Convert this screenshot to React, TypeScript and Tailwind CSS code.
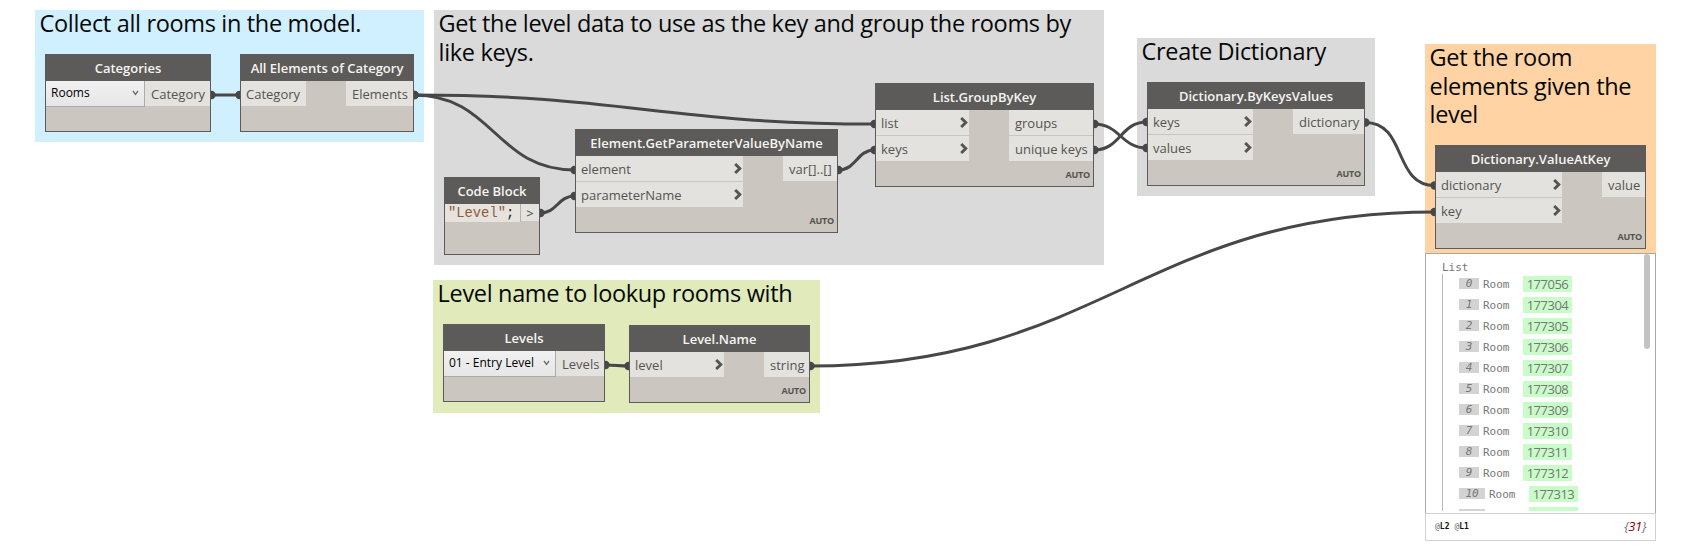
import type { ReactNode } from "react";

type Port = { label: string; chevron?: boolean };

type NodeProps = {
  title: string;
  place: string;
  inputs?: Port[];
  inputsWidth?: string;
  outputs?: Port[];
  outputsWidth?: string;
  auto?: boolean;
  children?: ReactNode;
};

function Chevron() {
  return (
    <svg className="h-[11px] w-2 shrink-0" viewBox="0 0 8 11" fill="none" stroke="#555452" strokeWidth="2.9">
      <path d="M1.2 1 L5.8 5.5 L1.2 10" />
    </svg>
  );
}

function PortRow({ label, chevron, right }: Port & { right?: boolean }) {
  return (
    <div
      className={
        "flex h-[25px] items-center bg-[#e3e2de] pb-px text-[13px] leading-none whitespace-nowrap text-[#555452] " +
        (right ? "pl-1.5" : "pl-[5px]")
      }
    >
      <span className="pt-[3px]">{label}</span>
      {chevron && (
        <span className="ml-auto pr-[1px]">
          <Chevron />
        </span>
      )}
    </div>
  );
}

function GraphNode({ title, place, inputs, inputsWidth = "", outputs, outputsWidth = "", auto, children }: NodeProps) {
  return (
    <section className={"absolute flex flex-col border border-[#5d5b59] bg-[#cbc6bf] " + place}>
      <h2 className="flex h-[26px] shrink-0 items-center justify-center bg-[#5d5b59] pt-px text-[13px] leading-none font-semibold whitespace-nowrap text-[#f5f4f2]">
        {title}
      </h2>
      <div className="flex items-start justify-between">
        {children}
        {inputs && (
          <div className={"flex flex-col gap-px " + inputsWidth}>
            {inputs.map((p) => (
              <PortRow key={p.label} {...p} />
            ))}
          </div>
        )}
        {outputs && (
          <div className={"flex flex-col gap-px " + outputsWidth}>
            {outputs.map((p) => (
              <PortRow key={p.label} {...p} right />
            ))}
          </div>
        )}
      </div>
      {auto && (
        <div className="mt-auto pr-[3px] pb-[7px] text-right text-[9px] leading-[9px] font-bold tracking-[-0.2px] text-[#555452]">AUTO</div>
      )}
    </section>
  );
}

function Group({ place, children }: { place: string; children: ReactNode }) {
  return (
    <div className={"absolute pl-[4.6px] text-[23.5px] leading-[28.6px] tracking-[-0.33px] whitespace-pre text-[#060808] " + place}>
      <p className="-mt-px">{children}</p>
    </div>
  );
}

function Dropdown({ value, width }: { value: string; width: string }) {
  return (
    <div
      className={
        "flex h-[26px] items-center justify-between border-r border-b border-[#a9abaf] bg-linear-to-b from-[#f1f1f1] to-[#e6e6e6] pr-[5px] pb-px pl-[5px] text-[12px] leading-none whitespace-nowrap text-black " +
        width
      }
    >
      <span>{value}</span>
      <svg className="mb-px h-[6px] w-[7px]" viewBox="0 0 7 6" fill="none" stroke="#6a6a6a" strokeWidth="1.3">
        <path d="M1 1 L3.5 4.3 L6 1" />
      </svg>
    </div>
  );
}

const wires: [number, number, number, number][] = [
  [211, 95, 240, 95],
  [414, 95, 875, 124],
  [414, 95, 575, 170],
  [540, 213, 575, 196],
  [838, 170, 875, 150],
  [1094, 124, 1147, 148],
  [1094, 150, 1147, 122],
  [1365, 122.5, 1435, 185.5],
  [605, 365, 629, 366],
  [810, 366, 1435, 212],
];

function Wires() {
  return (
    <svg className="absolute inset-0" width="1682" height="552" viewBox="0 0 1682 552" fill="none">
      {wires.map(([x1, y1, x2, y2], i) => {
        const k = Math.hypot(x2 - x1, y2 - y1) * 0.45;
        return (
          <g key={i}>
            <path d={`M${x1} ${y1} C${x1 + k} ${y1} ${x2 - k} ${y2} ${x2} ${y2}`} stroke="#474747" strokeWidth="3" />
            <circle cx={x1 + 0.5} cy={y1} r="4.2" fill="#474747" />
            <circle cx={x2 - 0.5} cy={y2} r="4.2" fill="#474747" />
          </g>
        );
      })}
    </svg>
  );
}

const rooms = [177056, 177304, 177305, 177306, 177307, 177308, 177309, 177310, 177311, 177312, 177313];

function Preview() {
  return (
    <section className="absolute top-[253px] left-[1425px] flex h-[288px] w-[231px] flex-col bg-white">
      <div className="relative h-[260px] border border-b-0 border-[#a8a8a8] pt-[6px] pl-4">
        <div className="h-[251px] overflow-hidden font-['DejaVu_Sans_Mono',monospace] text-[11px] text-[#777]">
          <div className="h-[14px] leading-[15px]">List</div>
          <div className="flex h-[500px] flex-col gap-[5px] border-l border-[#b9b9b9] pt-[2px] pl-4">
            {rooms.map((id, i) => (
              <div key={id} className="flex h-4 shrink-0 items-center leading-4">
                <span className={"mb-px flex h-[11px] items-center justify-center bg-[#d3d3d3] italic " + (i > 9 ? "w-[26px]" : "w-5")}>
                  <span className="pt-px">{i}</span>
                </span>
                <span className="w-[44px] pt-px pl-1">Room</span>
                <span className="flex h-4 w-[49px] items-center justify-center bg-[#c9fcc9] font-['Open_Sans',sans-serif] text-[13px] leading-none tracking-[-0.5px]">
                  {id}
                </span>
              </div>
            ))}
            <div className="flex h-4 shrink-0 items-center gap-[44px]">
              <span className="mb-px h-[11px] w-[26px] bg-[#d3d3d3]" />
              <span className="h-4 w-[49px] bg-[#c9fcc9]" />
            </div>
          </div>
        </div>
        <div className="absolute top-0 right-[5px] h-[95px] w-[6px] rounded-full bg-[#c3c3c3]" />
      </div>
      <div className="flex h-[28px] items-center justify-between border border-[#d2d2d2] pr-[9px] pl-[9px]">
        <div className="flex gap-[5px] font-['DejaVu_Sans_Mono',monospace] text-[8px] font-bold text-[#111]">
          <span>
            <span className="font-normal text-[#666]">@</span>L2
          </span>
          <span>
            <span className="font-normal text-[#666]">@</span>L1
          </span>
        </div>
        <div className="pb-[2px] text-[13px] leading-none tracking-[-0.4px] text-[#777] italic">
          {"{"}
          <span className="text-[#8b0000]">31</span>
          {"}"}
        </div>
      </div>
    </section>
  );
}

export default function App() {
  return (
    <main className="relative h-[552px] w-[1682px] overflow-hidden bg-white font-['Open_Sans',sans-serif]">
      <Group place="top-[10px] left-[35px] h-[132px] w-[389px] bg-[#d0efff]">Collect all rooms in the model.</Group>
      <Group place="top-[10px] left-[434px] h-[255px] w-[670px] bg-[#dadada]">
        {"Get the level data to use as the key and group the rooms by\nlike keys."}
      </Group>
      <Group place="top-[38px] left-[1137px] h-[158px] w-[238px] bg-[#dadada]">Create Dictionary</Group>
      <Group place="top-[44px] left-[1425px] h-[210px] w-[231px] bg-[#ffd3a3]">{"Get the room\nelements given the\nlevel"}</Group>
      <Group place="top-[280px] left-[433px] h-[133px] w-[387px] bg-[#e0eaba]">Level name to lookup rooms with</Group>

      <Wires />

      <GraphNode title="Categories" place="top-[54px] left-[45px] h-[78px] w-[166px]" outputs={[{ label: "Category" }]} outputsWidth="w-[65px]">
        <Dropdown value="Rooms" width="w-[99px]" />
      </GraphNode>
      <GraphNode
        title="All Elements of Category"
        place="top-[54px] left-[240px] h-[78px] w-[174px]"
        inputs={[{ label: "Category" }]}
        inputsWidth="w-[65px]"
        outputs={[{ label: "Elements" }]}
        outputsWidth="w-[67px]"
      />
      <GraphNode title="Code Block" place="top-[177px] left-[444px] h-[78px] w-[96px]">
        <div className="flex h-[18px] w-[76px] items-center border-r border-[#b5b0aa] bg-[#e6e3df] pt-[2px] pl-[3px] font-['Liberation_Mono',monospace] text-[13.8px] leading-none whitespace-nowrap text-[#222]">
          <span className="text-[#8f5c38]">"Level"</span>;
        </div>
        <div className="flex h-[17px] w-[18px] items-center justify-center bg-[#e3e2de] pt-px text-[13px] leading-none text-[#444]">&gt;</div>
      </GraphNode>
      <GraphNode
        title="Element.GetParameterValueByName"
        place="top-[129px] left-[575px] h-[104px] w-[263px]"
        inputs={[
          { label: "element", chevron: true },
          { label: "parameterName", chevron: true },
        ]}
        inputsWidth="w-[167px]"
        outputs={[{ label: "var[]..[]" }]}
        outputsWidth="w-[54px]"
        auto
      />
      <GraphNode
        title="List.GroupByKey"
        place="top-[83px] left-[875px] h-[104px] w-[219px]"
        inputs={[
          { label: "list", chevron: true },
          { label: "keys", chevron: true },
        ]}
        inputsWidth="w-[93px]"
        outputs={[{ label: "groups" }, { label: "unique keys" }]}
        outputsWidth="w-[84px]"
        auto
      />
      <GraphNode
        title="Dictionary.ByKeysValues"
        place="top-[82px] left-[1147px] h-[104px] w-[218px]"
        inputs={[
          { label: "keys", chevron: true },
          { label: "values", chevron: true },
        ]}
        inputsWidth="w-[105px]"
        outputs={[{ label: "dictionary" }]}
        outputsWidth="w-[71px]"
        auto
      />
      <GraphNode
        title="Dictionary.ValueAtKey"
        place="top-[145px] left-[1435px] h-[104px] w-[211px]"
        inputs={[
          { label: "dictionary", chevron: true },
          { label: "key", chevron: true },
        ]}
        inputsWidth="w-[126px]"
        outputs={[{ label: "value" }]}
        outputsWidth="w-[43px]"
        auto
      />
      <GraphNode title="Levels" place="top-[324px] left-[443px] h-[78px] w-[162px]" outputs={[{ label: "Levels" }]} outputsWidth="w-[48px]">
        <Dropdown value="01 - Entry Level" width="w-[112px]" />
      </GraphNode>
      <GraphNode
        title="Level.Name"
        place="top-[325px] left-[629px] h-[78px] w-[181px]"
        inputs={[{ label: "level", chevron: true }]}
        inputsWidth="w-[94px]"
        outputs={[{ label: "string" }]}
        outputsWidth="w-[45px]"
        auto
      />

      <Preview />
    </main>
  );
}
